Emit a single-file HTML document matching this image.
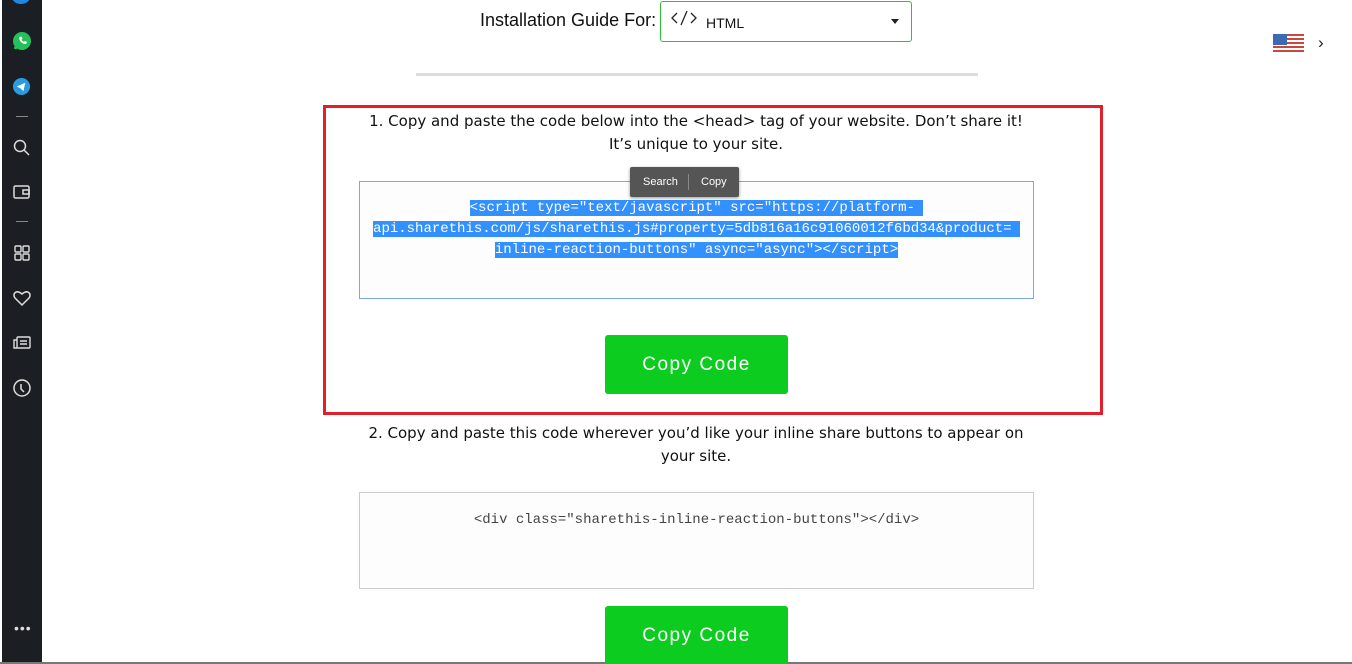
<!DOCTYPE html>
<html><head><meta charset="utf-8"><style>
*{margin:0;padding:0;box-sizing:border-box}
html,body{width:1352px;height:664px;overflow:hidden;background:#fff;font-family:"Liberation Sans",sans-serif;position:relative}
.side{position:absolute;left:2px;top:0;width:40px;height:662px;background:#1b1e23}
.ic{position:absolute;left:10px}
.abs{position:absolute}
.t{font-family:"DejaVu Sans","Liberation Sans",sans-serif;font-size:15px;color:#111;text-align:center;line-height:23px}
.ta{position:absolute;background:#fdfdfd;border:1px solid #ccc;font-family:"Liberation Mono",monospace;font-size:14px;text-align:center;line-height:21px;color:#444}
.btn{position:absolute;width:183px;height:59px;background:#0ccc1f;border-radius:3px;color:#fff;font-size:19px;letter-spacing:1.5px;text-align:center;line-height:59px;font-family:"Liberation Sans",sans-serif}
.sel{background:#3390ff;color:#fff}
</style></head><body>
<div class="side">
 <div class="abs" style="left:10px;top:-10px;width:18px;height:14px;border-radius:50%;background:#1e88e5"></div>
 <svg class="ic" style="top:31px" width="20" height="20" viewBox="0 0 20 20"><circle cx="10" cy="10" r="9" fill="#25c05a"/><path d="M3 18l2-4" stroke="#25c05a" stroke-width="3"/><path d="M7 6c0 4 3 7 7 7l1-2-2-1-1 1c-1-.5-2-1.5-2.5-2.5l1-1-1-2z" fill="#fff"/></svg>
 <svg class="ic" style="top:77px" width="19" height="19" viewBox="0 0 20 20"><circle cx="10" cy="10" r="9" fill="#2b9be0"/><path d="M5 10l9-4-2 9-3-3z" fill="#fff"/></svg>
 <div class="abs" style="left:14px;top:116px;width:12px;height:1px;background:#888"></div>
 <svg class="ic" style="top:138px" width="20" height="20" viewBox="0 0 20 20" fill="none" stroke="#ddd" stroke-width="1.5"><circle cx="8" cy="8" r="5.5"/><path d="M12 12l5 5"/></svg>
 <svg class="ic" style="top:182px" width="20" height="20" viewBox="0 0 20 20" fill="none" stroke="#ddd" stroke-width="1.5"><rect x="2" y="4" width="15" height="12" rx="1.5"/><rect x="11" y="8" width="6" height="4"/></svg>
 <div class="abs" style="left:14px;top:221px;width:12px;height:1px;background:#888"></div>
 <svg class="ic" style="top:243px" width="20" height="20" viewBox="0 0 20 20" fill="none" stroke="#ddd" stroke-width="1.4"><rect x="3" y="3" width="6" height="6" rx="1"/><rect x="11" y="3" width="6" height="6" rx="1"/><rect x="3" y="11" width="6" height="6" rx="1"/><rect x="11" y="11" width="6" height="6" rx="1"/></svg>
 <svg class="ic" style="top:288px" width="20" height="20" viewBox="0 0 20 20" fill="none" stroke="#ddd" stroke-width="1.5"><path d="M10 17L3 10C0 6 4 1 10 6c6-5 10 0 7 4z"/></svg>
 <svg class="ic" style="top:333px" width="20" height="20" viewBox="0 0 20 20" fill="none" stroke="#ddd" stroke-width="1.4"><rect x="5" y="4" width="13" height="11" rx="1"/><path d="M5 7H2v8h3M8 8h7M8 11h7"/></svg>
 <svg class="ic" style="top:378px" width="20" height="20" viewBox="0 0 20 20" fill="none" stroke="#ddd" stroke-width="1.5"><circle cx="10" cy="10" r="8"/><path d="M9 6v5l3 3"/></svg>
 <div class="abs" style="left:12px;top:620px;color:#ddd;font-size:14px;letter-spacing:1px">•••</div>
</div>
<div class="abs" style="left:0;top:662px;width:1352px;height:2px;background:#777"></div>
<div class="abs" style="left:480px;top:10px;font-size:18px;color:#111">Installation Guide For:</div>
<div class="abs" style="left:660px;top:1px;width:252px;height:41px;border:1px solid #2ec23b;border-radius:3px">
 <svg class="abs" style="left:10px;top:8px" width="26" height="16" viewBox="0 0 26 16" fill="none" stroke="#222" stroke-width="1.3"><path d="M6 3L1 8l5 5M16 1l-6 14M20 3l5 5-5 5"/></svg>
 <div class="abs" style="left:45px;top:13px;font-size:14px;color:#111">HTML</div>
 <div class="abs" style="left:230px;top:17px;width:0;height:0;border-left:4px solid transparent;border-right:4px solid transparent;border-top:5px solid #222"></div>
</div>
<div class="abs" style="left:416px;top:73px;width:562px;height:3px;background:#ddd"></div>
<svg class="abs" style="left:1273px;top:34px" width="31" height="20"><rect width="31" height="20" fill="#fff"/><g fill="#c9473d"><rect y="0" width="31" height="2"/><rect y="4" width="31" height="2"/><rect y="8" width="31" height="2"/><rect y="12" width="31" height="2"/><rect y="16" width="31" height="2"/></g><rect width="14" height="11" fill="#3b6bb3"/></svg>
<div class="abs" style="left:1318px;top:33px;font-size:17px;color:#222">›</div>
<div class="abs" style="left:323px;top:105px;width:780px;height:310px;border:3px solid #e21f2b"></div>
<div class="abs t" style="left:313px;top:110px;width:766px">1. Copy and paste the code below into the &lt;head&gt; tag of your website. Don’t share it!<br>It’s unique to your site.</div>
<div class="ta" style="left:359px;top:181px;width:675px;height:118px;border-color:#7aa7e8;padding-top:16px;color:#fff">
<span class="sel">&lt;script type="text/javascript" src="https://platform-&nbsp;</span><br><span class="sel">api.sharethis.com/js/sharethis.js#property=5db816a16c91060012f6bd34&amp;product=&nbsp;</span><br><span class="sel">inline-reaction-buttons" async="async"&gt;&lt;/script&gt;</span></div>
<div class="abs" style="left:630px;top:167px;width:109px;height:30px;background:#555;border-radius:2px;color:#fff;font-size:11px;box-shadow:0 1px 3px rgba(0,0,0,.4)">
 <span class="abs" style="left:13px;top:9px">Search</span><span class="abs" style="left:58px;top:7px;width:1px;height:16px;background:#888"></span><span class="abs" style="left:71px;top:9px">Copy</span></div>
<div class="btn" style="left:605px;top:335px">Copy Code</div>
<div class="abs t" style="left:313px;top:422px;width:766px">2. Copy and paste this code wherever you’d like your inline share buttons to appear on<br>your site.</div>
<div class="ta" style="left:359px;top:492px;width:675px;height:97px;padding-top:17px;font-size:14px">&lt;div class="sharethis-inline-reaction-buttons"&gt;&lt;/div&gt;</div>
<div class="btn" style="left:605px;top:606px">Copy Code</div>
</body></html>
